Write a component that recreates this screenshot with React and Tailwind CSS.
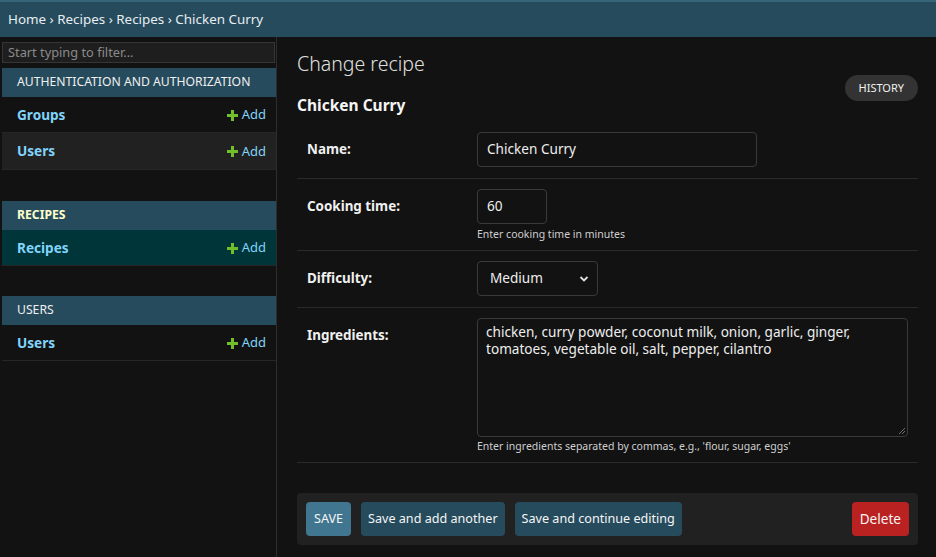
import React from "react";

const font = { fontFamily: '"Noto Sans", "Open Sans", sans-serif' };

function PlusIcon() {
  return (
    <svg width="11" height="11" viewBox="0 0 11 11" className="mr-[4px]">
      <path d="M4 0h3v4h4v3H7v4H4V7H0V4h4z" fill="#70bf2b" />
    </svg>
  );
}

function Caption({ children, current }) {
  return (
    <div
      className={`h-[29px] flex items-center px-[15px] bg-[#264b5d] text-[12.2px] uppercase whitespace-nowrap ${
        current ? "font-bold text-[#ffffcc]" : "text-[#f0f0f0]"
      }`}
    >
      {children}
    </div>
  );
}

function ModelRow({ name, bg = "", h = "h-[36px]" }) {
  return (
    <div className={`${h} flex items-center justify-between pl-[15px] pr-[10px] pt-[1px] border-b border-[#262626] ${bg}`}>
      <span className="text-[13.6px] font-bold text-[#81d4fa]">{name}</span>
      <span className="flex items-center text-[13px] text-[#81d4fa]">
        <PlusIcon />
        Add
      </span>
    </div>
  );
}

function Sidebar() {
  return (
    <aside className="w-[277px] shrink-0 border-r border-[#2d2d2d] pt-[5px] pl-[2px]">
      <div className="mr-[1px] h-[21px] border border-[#353535] bg-[#1e1e1e] px-[5px] flex items-center text-[12.8px] text-[#8a8a8a]">
        Start typing to filter...
      </div>
      <div className="mt-[5px]">
        <Caption>Authentication and Authorization</Caption>
        <ModelRow name="Groups" />
        <ModelRow name="Users" bg="bg-[#212121]" h="h-[37px]" />
      </div>
      <div className="mt-[31px]">
        <Caption current>Recipes</Caption>
        <ModelRow name="Recipes" bg="bg-[#00363a]" />
      </div>
      <div className="mt-[30px]">
        <Caption>Users</Caption>
        <ModelRow name="Users" />
      </div>
    </aside>
  );
}

function FormRow({ label, children, className = "" }) {
  return (
    <div className={`flex border-b border-[#2a2a2a] pl-[10px] pr-[10px] pt-[10px] ${className}`}>
      <div className="w-[170px] shrink-0 text-[13.4px] font-bold text-[#f0f0f0] h-[35px] flex items-center">
        {label}
      </div>
      <div className="flex-1">{children}</div>
    </div>
  );
}

const inputCls =
  "h-[35px] rounded-[4px] border border-[#3a3a3a] bg-[#121212] flex items-center text-[13.6px] text-[#eeeeee]";

export default function App() {
  return (
    <div className="w-[936px] h-[557px] overflow-hidden bg-[#121212] text-[#eeeeee] flex flex-col" style={font}>
      <div className="h-[37px] shrink-0 bg-[#264b5d] border-t-2 border-[#36657a] px-[8px] flex items-center text-[13.4px] text-[#e6edf1]">
        Home › Recipes › Recipes › Chicken Curry
      </div>
      <div className="flex flex-1">
        <Sidebar />
        <main className="flex-1 pl-[20px] pr-[18px]">
          <div className="flex justify-between">
            <div>
              <h1 className="mt-[15px] h-[24px] leading-[24px] text-[19.5px] font-light text-[#e0e0e0]">Change recipe</h1>
              <h2 className="mt-[19px] h-[20px] leading-[20px] text-[15.5px] font-bold text-[#f5f5f5]">Chicken Curry</h2>
            </div>
            <div className="mt-[38px] h-[26px] px-[14px] rounded-full bg-[#333333] flex items-center text-[11px] uppercase text-[#f0f0f0]">
              History
            </div>
          </div>
          <div className="mt-[7px]">
            <FormRow label="Name:" className="pb-[11px]">
              <div className={`${inputCls} w-[280px] px-[9px]`}>Chicken Curry</div>
            </FormRow>
            <FormRow label="Cooking time:" className="pb-[9px]">
              <div className={`${inputCls} w-[70px] px-[9px]`}>60</div>
              <div className="mt-[3px] text-[10.5px] leading-[14px] text-[#cfcfcf]">Enter cooking time in minutes</div>
            </FormRow>
            <FormRow label="Difficulty:" className="pb-[11px]">
              <div className={`${inputCls} w-[121px] pl-[12px] pr-[8px] justify-between`}>
                <span>Medium</span>
                <svg width="10" height="8" viewBox="0 0 10 8">
                  <path d="M1.5 2l3.5 3.5L8.5 2" fill="none" stroke="#e0e0e0" strokeWidth="1.8" />
                </svg>
              </div>
            </FormRow>
            <FormRow label="Ingredients:" className="pb-[9px]">
              <div className="relative h-[119px] rounded-[4px] border border-[#3a3a3a] bg-[#121212] px-[8px] py-[4px] text-[13.6px] text-[#eeeeee]">
                <div className="leading-[17px]">chicken, curry powder, coconut milk, onion, garlic, ginger,</div>
                <div className="leading-[17px]">tomatoes, vegetable oil, salt, pepper, cilantro</div>
                <svg width="6" height="6" viewBox="0 0 6 6" className="absolute right-[2px] bottom-[2px]">
                  <path d="M6 0L0 6M6 3L3 6" stroke="#888" strokeWidth="0.8" />
                </svg>
              </div>
              <div className="mt-[2px] text-[10.5px] leading-[14px] text-[#cfcfcf]">
                Enter ingredients separated by commas, e.g., 'flour, sugar, eggs'
              </div>
            </FormRow>
          </div>
          <div className="mt-[30px] h-[52px] rounded-[4px] bg-[#212121] px-[9px] flex items-center justify-between">
            <div className="flex gap-[10px]">
              <div className="h-[34px] px-[8px] rounded-[4px] bg-[#417690] flex items-center text-[12.6px] uppercase text-[#f5f5f5]">
                Save
              </div>
              <div className="h-[34px] px-[7px] rounded-[4px] bg-[#264b5d] flex items-center text-[12.6px] text-[#f5f5f5]">
                Save and add another
              </div>
              <div className="h-[34px] px-[7px] rounded-[4px] bg-[#264b5d] flex items-center text-[12.6px] text-[#f5f5f5]">
                Save and continue editing
              </div>
            </div>
            <div className="h-[34px] px-[8px] rounded-[4px] bg-[#ba2121] flex items-center text-[13.6px] text-[#f5f5f5]">
              Delete
            </div>
          </div>
        </main>
      </div>
    </div>
  );
}
